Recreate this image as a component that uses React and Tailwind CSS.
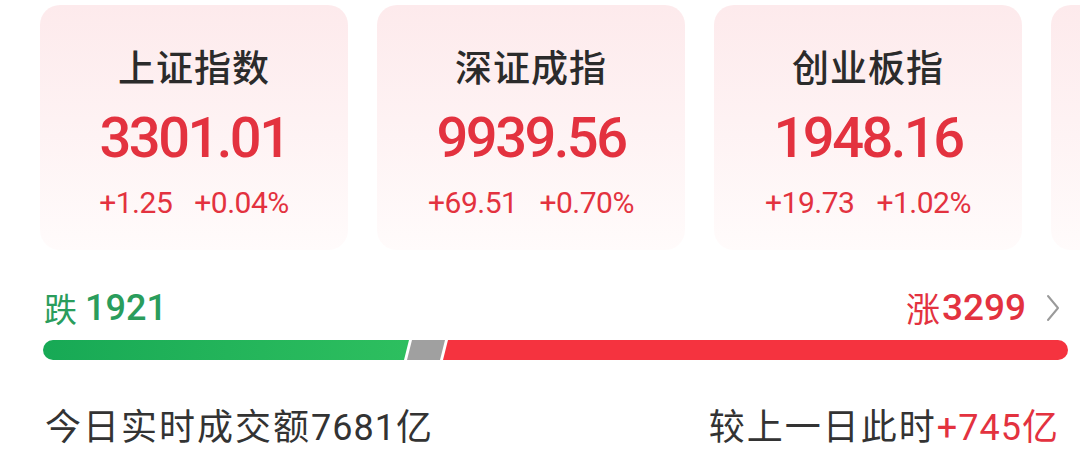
import React from "react";

const cards = [
  { name: "上证指数", value: "3301.01", chg: "+1.25", pct: "+0.04%" },
  { name: "深证成指", value: "9939.56", chg: "+69.51", pct: "+0.70%" },
  { name: "创业板指", value: "1948.16", chg: "+19.73", pct: "+1.02%" },
  { name: "", value: "", chg: "", pct: "" },
];

const cjk = "font-['Noto_Sans_CJK_SC',sans-serif]";
const num = "font-['Roboto','Noto_Sans_CJK_SC',sans-serif]";

function Card({ c }) {
  return (
    <div className="w-[308px] h-[245px] shrink-0 rounded-[20px] bg-gradient-to-b from-[#fdeaec] to-[#fffbfb] flex flex-col items-center">
      <div className={`${cjk} mt-[37px] h-[48px] text-[37px] leading-[48px] font-medium text-[#2b2b2b] tracking-[1px]`}>{c.name}</div>
      <div className={`${num} mt-[18px] h-[60px] text-[56px] leading-[60px] font-medium text-[#e3323f] tracking-[-2.5px]`}>{c.value}</div>
      <div className={`${num} mt-[17px] flex gap-[22px] text-[30px] leading-[36px] text-[#e3323f] tracking-[-0.5px]`}>
        <span>{c.chg}</span>
        <span>{c.pct}</span>
      </div>
    </div>
  );
}

export default function App() {
  return (
    <div className="w-[1080px] h-[465px] overflow-hidden bg-white">
      <div className="flex gap-[29px] pl-[40px] pt-[5px]">
        {cards.map((c, i) => (
          <Card key={i} c={c} />
        ))}
      </div>
      <div className="mt-[40px] pl-[44px] pr-[20px] flex items-center justify-between h-[36px]">
        <div className="flex items-center">
          <span className={`${cjk} text-[33px] leading-[36px] text-[#2a9d5c]`}>跌</span>
          <span className={`${num} ml-[8px] text-[36px] leading-[36px] font-medium text-[#2a9d5c]`}>1921</span>
        </div>
        <div className="flex items-center">
          <span className={`${cjk} text-[34px] leading-[36px] text-[#e3323f]`}>涨</span>
          <span className={`${num} ml-[2px] text-[37px] leading-[36px] font-medium text-[#e3323f]`}>3299</span>
          <svg className="ml-[20px]" width="14" height="28" viewBox="0 0 14 28" fill="none">
            <path d="M2 2 L12 14 L2 26" stroke="#9a9a9a" strokeWidth="2" strokeLinecap="round" strokeLinejoin="round" />
          </svg>
        </div>
      </div>
      <div className="mt-[14px] ml-[43px] w-[1025px] h-[20px] rounded-full overflow-hidden flex">
        <div className="w-[366px] h-full bg-gradient-to-r from-[#17a955] to-[#2dbf5f] [clip-path:polygon(0_0,100%_0,calc(100%-5px)_100%,0_100%)]"></div>
        <div className="-ml-[2px] w-[38px] h-full bg-[#a0a0a0] [clip-path:polygon(5px_0,100%_0,calc(100%-5px)_100%,0_100%)]"></div>
        <div className="-ml-[2px] flex-1 h-full bg-[#f5333f] [clip-path:polygon(5px_0,100%_0,100%_100%,0_100%)]"></div>
      </div>
      <div className="mt-[42px] pl-[45px] pr-[20px] flex items-center justify-between">
        <div className={`${cjk} text-[36px] leading-[44px] text-[#333333] tracking-[2px]`}>
          今日实时成交额<span className={`${num} tracking-[1px]`}>7681</span>亿
        </div>
        <div className={`${cjk} text-[36px] leading-[44px] text-[#333333] tracking-[2px]`}>
          较上一日此时<span className="text-[#e3323f]"><span className={`${num} tracking-[1px]`}>+745</span>亿</span>
        </div>
      </div>
    </div>
  );
}
